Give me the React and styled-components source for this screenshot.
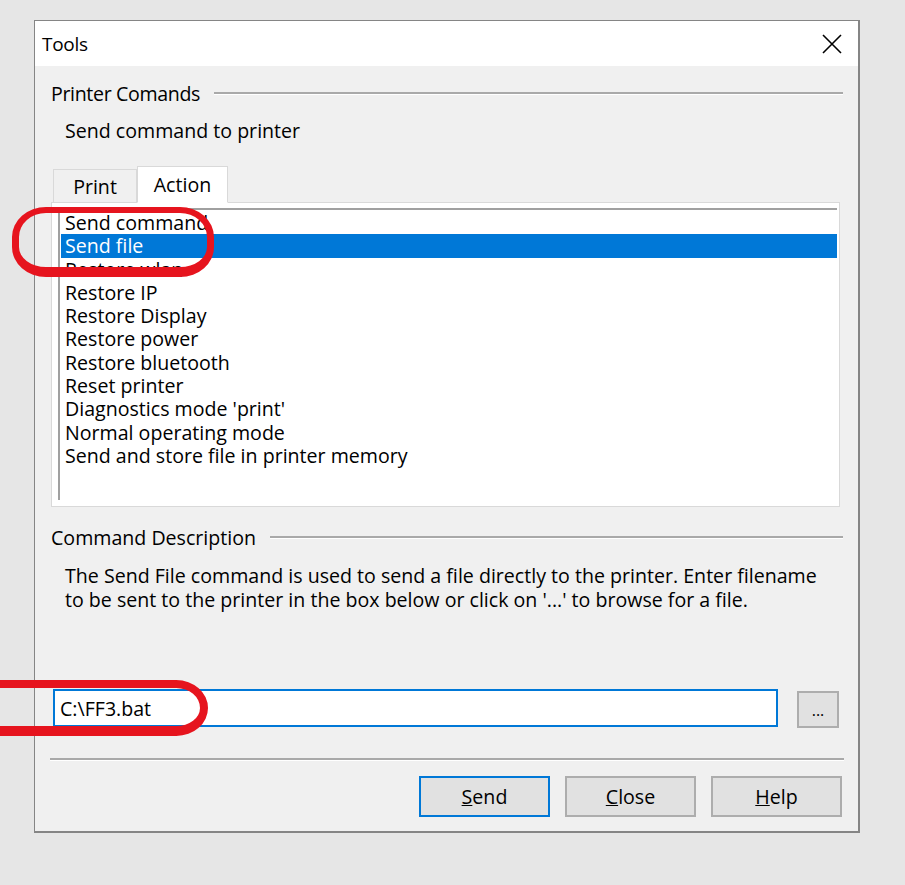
import React from "react";
import styled, { createGlobalStyle } from "styled-components";

const GlobalStyle = createGlobalStyle`
  body {
    margin: 0;
    background: #e6e6e6;
    font-family: "Open Sans", "Noto Sans", sans-serif;
    color: #000;
  }
`
const Page = styled.div`
  position: relative;
  min-height: 885px;
  padding: 20px 0 0 34px;
  box-sizing: border-box;
  overflow: hidden;
`
const Dialog = styled.div`
  width: 826px;
  height: 813px;
  box-sizing: border-box;
  border: 1px solid #858585;
  border-right-width: 2px;
  border-bottom-width: 2px;
  display: flex;
  flex-direction: column;
  background: #f0f0f0;
`
const TitleBar = styled.div`
  height: 45px;
  flex-shrink: 0;
  background: #fff;
  display: flex;
  align-items: center;
  justify-content: space-between;
  padding: 0 16px 0 7px;
  font-size: 19px;
  letter-spacing: -0.3px;
`
const CloseIcon = styled.svg`
  width: 20px;
  height: 20px;
`
const Body = styled.div`
  flex: 1;
  display: flex;
  flex-direction: column;
  padding: 15px 15px 15px 16px;
  font-size: 19.6px;
`
const GroupHeader = styled.div`
  display: flex;
  align-items: center;
  gap: 14px;
  height: 24px;
  margin-top: ${p => p.$top || 0}px;
  letter-spacing: ${p => (p.$tight ? "-0.35px" : "normal")};
`
const Etched = styled.div`
  flex: 1;
  border-top: 2px solid #a9a9a9;
  border-bottom: 1px solid #fff;
`
const Hint = styled.div`
  line-height: 24px;
  padding-left: 14px;
  margin-top: 14px;
`
const TabRow = styled.div`
  display: flex;
  align-items: flex-end;
  padding-left: 2px;
  margin-top: 23px;
`
const Tab = styled.div`
  position: relative;
  z-index: ${p => (p.$active ? 1 : 0)};
  width: ${p => p.$width}px;
  height: ${p => (p.$active ? 37 : 34)}px;
  box-sizing: border-box;
  margin-bottom: -1px;
  border: 1px solid #d9d9d9;
  border-bottom-color: ${p => (p.$active ? "#fff" : "#d9d9d9")};
  background: ${p => (p.$active ? "#fff" : "#f0f0f0")};
  display: flex;
  align-items: center;
  justify-content: center;
`
const Panel = styled.div`
  width: 789px;
  height: 305px;
  box-sizing: border-box;
  border: 1px solid #d9d9d9;
  background: #fff;
  padding: 5px 2px 6px 6px;
  display: flex;
`
const List = styled.div`
  flex: 1;
  border-top: 2px solid #a0a0a0;
  border-left: 2px solid #a0a0a0;
  padding: 1px 0 0 1px;
`
const Item = styled.div`
  height: 23.3px;
  line-height: 23.3px;
  padding-left: 4px;
  white-space: nowrap;
  background: ${p => (p.$selected ? "#0078d7" : "transparent")};
  color: ${p => (p.$selected ? "#fff" : "#000")};
`
const Description = styled.div`
  padding-left: 14px;
  margin-top: 15px;
  line-height: 24px;
`
const FileRow = styled.div`
  display: flex;
  align-items: center;
  margin-top: 76px;
  padding-left: 2px;
`
const FileInput = styled.input`
  width: 725px;
  height: 38px;
  box-sizing: border-box;
  border: 2px solid #0078d7;
  padding: 0 5px;
  font: inherit;
  color: #000;
  outline: none;
`
const Browse = styled.button`
  width: 42px;
  height: 37px;
  margin-left: 19px;
  margin-top: 3px;
  border: 2px solid #adadad;
  background: #e1e1e1;
  font: inherit;
  font-size: 16px;
  padding: 0;
`
const Separator = styled.div`
  margin: 30px 0 0 -1px;
  width: 794px;
  border-top: 2px solid #a9a9a9;
  border-bottom: 1px solid #fff;
`
const Buttons = styled.div`
  display: flex;
  justify-content: flex-end;
  gap: 15px;
  margin: 15px 1px 0 0;
`
const Button = styled.button`
  width: 131px;
  height: 41px;
  box-sizing: border-box;
  border: 2px solid ${p => (p.$default ? "#0078d7" : "#adadad")};
  background: #e1e1e1;
  font: inherit;
  color: #000;
  padding: 0;
`
// hand-drawn red marker rings laid over the dialog
const Mark = styled.div`
  position: absolute;
  left: ${p => p.$x}px;
  top: ${p => p.$y}px;
  width: ${p => p.$w}px;
  height: ${p => p.$h}px;
  box-sizing: border-box;
  border: solid #e6141e;
  border-width: ${p => p.$edge};
  border-radius: 34px / 30px;
  pointer-events: none;
`

const commands = [
  "Send command",
  "Send file",
  "Restore wlan",
  "Restore IP",
  "Restore Display",
  "Restore power",
  "Restore bluetooth",
  "Reset printer",
  "Diagnostics mode 'print'",
  "Normal operating mode",
  "Send and store file in printer memory",
]

export default function App() {
  return (
    <Page>
      <GlobalStyle />
      <Dialog>
        <TitleBar>
          <span>Tools</span>
          <CloseIcon viewBox="0 0 20 20">
            <path d="M1 1 L19 19 M19 1 L1 19" stroke="#000" strokeWidth="1.6" fill="none" />
          </CloseIcon>
        </TitleBar>
        <Body>
          <GroupHeader $tight>
            <span>Printer Comands</span>
            <Etched />
          </GroupHeader>
          <Hint>Send command to printer</Hint>

          <TabRow>
            <Tab $width={84}>Print</Tab>
            <Tab $width={91} $active>Action</Tab>
          </TabRow>
          <Panel>
            <List>
              {commands.map((c, i) => (
                <Item key={c} $selected={i === 1}>{c}</Item>
              ))}
            </List>
          </Panel>

          <GroupHeader $top={18}>
            <span>Command Description</span>
            <Etched />
          </GroupHeader>
          <Description>
            The Send File command is used to send a file directly to the printer. Enter filename
            <br />
            to be sent to the printer in the box below or click on '...' to browse for a file.
          </Description>

          <FileRow>
            <FileInput defaultValue="C:\FF3.bat" />
            <Browse>...</Browse>
          </FileRow>
          <Separator />
          <Buttons>
            <Button $default><u>S</u>end</Button>
            <Button><u>C</u>lose</Button>
            <Button><u>H</u>elp</Button>
          </Buttons>
        </Body>
      </Dialog>
      <Mark $x={12} $y={207} $w={202} $h={70} $edge="6px 7px 10px 7px" />
      <Mark $x={-30} $y={680} $w={238} $h={56} $edge="8px 8px 10px 8px" />
    </Page>
  )
}
